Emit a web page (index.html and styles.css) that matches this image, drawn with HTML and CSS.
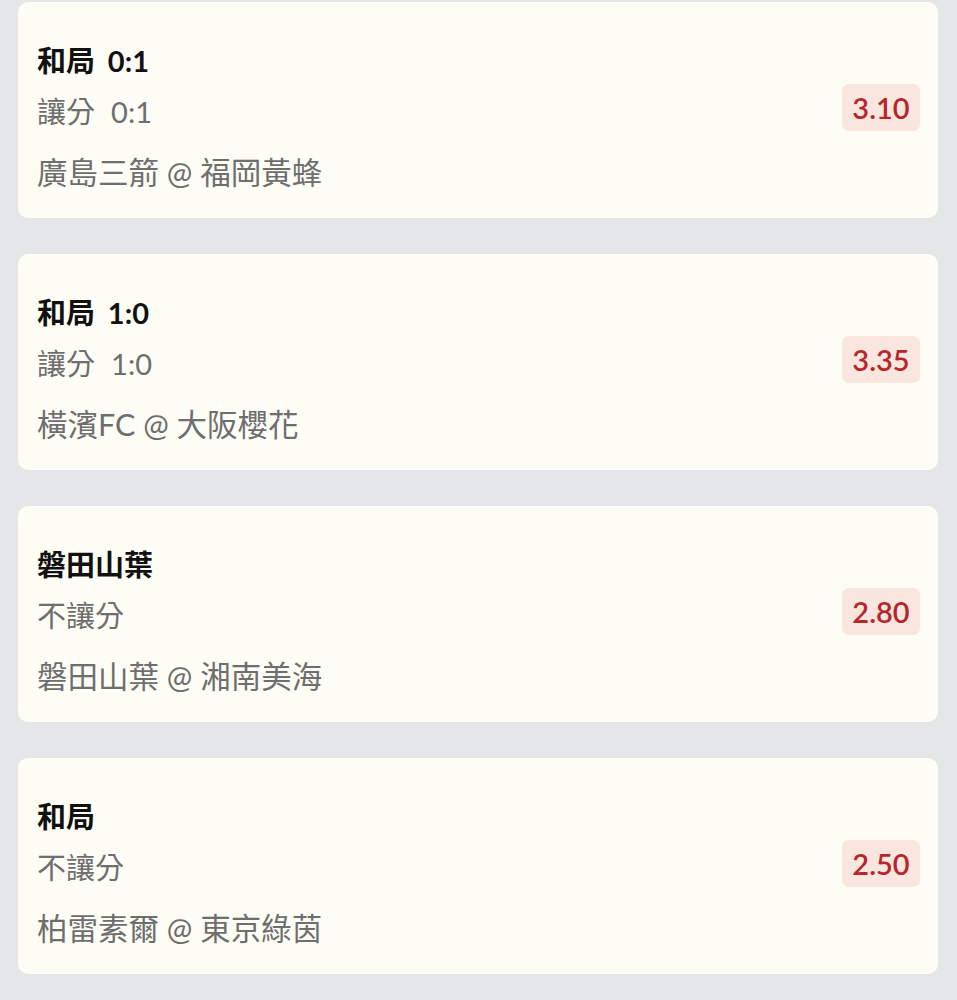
FILE: index.html
```html
<!DOCTYPE html>
<html lang="zh-Hant">
<head>
<meta charset="utf-8">
<link rel="stylesheet" href="styles.css">
</head>
<body>
<div class="list">
  <div class="card">
    <div class="info">
      <div class="title">和局 0:1</div>
      <div class="sub">讓分 0:1</div>
      <div class="teams">廣島三箭 @ 福岡黃蜂</div>
    </div>
    <div class="odds">3.10</div>
  </div>
  <div class="card">
    <div class="info">
      <div class="title">和局 1:0</div>
      <div class="sub">讓分 1:0</div>
      <div class="teams">橫濱FC @ 大阪櫻花</div>
    </div>
    <div class="odds">3.35</div>
  </div>
  <div class="card">
    <div class="info">
      <div class="title">磐田山葉</div>
      <div class="sub">不讓分</div>
      <div class="teams">磐田山葉 @ 湘南美海</div>
    </div>
    <div class="odds">2.80</div>
  </div>
  <div class="card">
    <div class="info">
      <div class="title">和局</div>
      <div class="sub">不讓分</div>
      <div class="teams">柏雷素爾 @ 東京綠茵</div>
    </div>
    <div class="odds">2.50</div>
  </div>
</div>
</body>
</html>
```

FILE: styles.css
```css
html, body {
  margin: 0;
  padding: 0;
  background: #e5e6e8;
  font-family: "Lato", "Noto Sans CJK TC", sans-serif;
}

.list {
  display: flex;
  flex-direction: column;
  gap: 36px;
  padding: 2px 19px 0 18px;
}

.card {
  height: 216px;
  box-sizing: border-box;
  background: #fdfdf5;
  border-radius: 10px;
  display: flex;
  align-items: center;
  justify-content: space-between;
  padding: 0 18px 0 19px;
}

.info {
  display: flex;
  flex-direction: column;
  padding-top: 12px;
}

.title {
  font-size: 29px;
  line-height: 36px;
  font-weight: 700;
  color: #111111;
  word-spacing: 0.2em;
}

.sub {
  font-size: 29px;
  line-height: 36px;
  margin-top: 15px;
  color: #6e6e6e;
  word-spacing: 0.3em;
}

.teams {
  font-size: 30.5px;
  line-height: 36px;
  margin-top: 24px;
  color: #6e6e6e;
}

.odds {
  width: 78px;
  height: 47px;
  border-radius: 7px;
  background: #f8e6df;
  color: #b5272a;
  font-size: 29px;
  font-weight: 600;
  display: flex;
  align-items: center;
  justify-content: center;
  margin-top: -5px;
}
```
